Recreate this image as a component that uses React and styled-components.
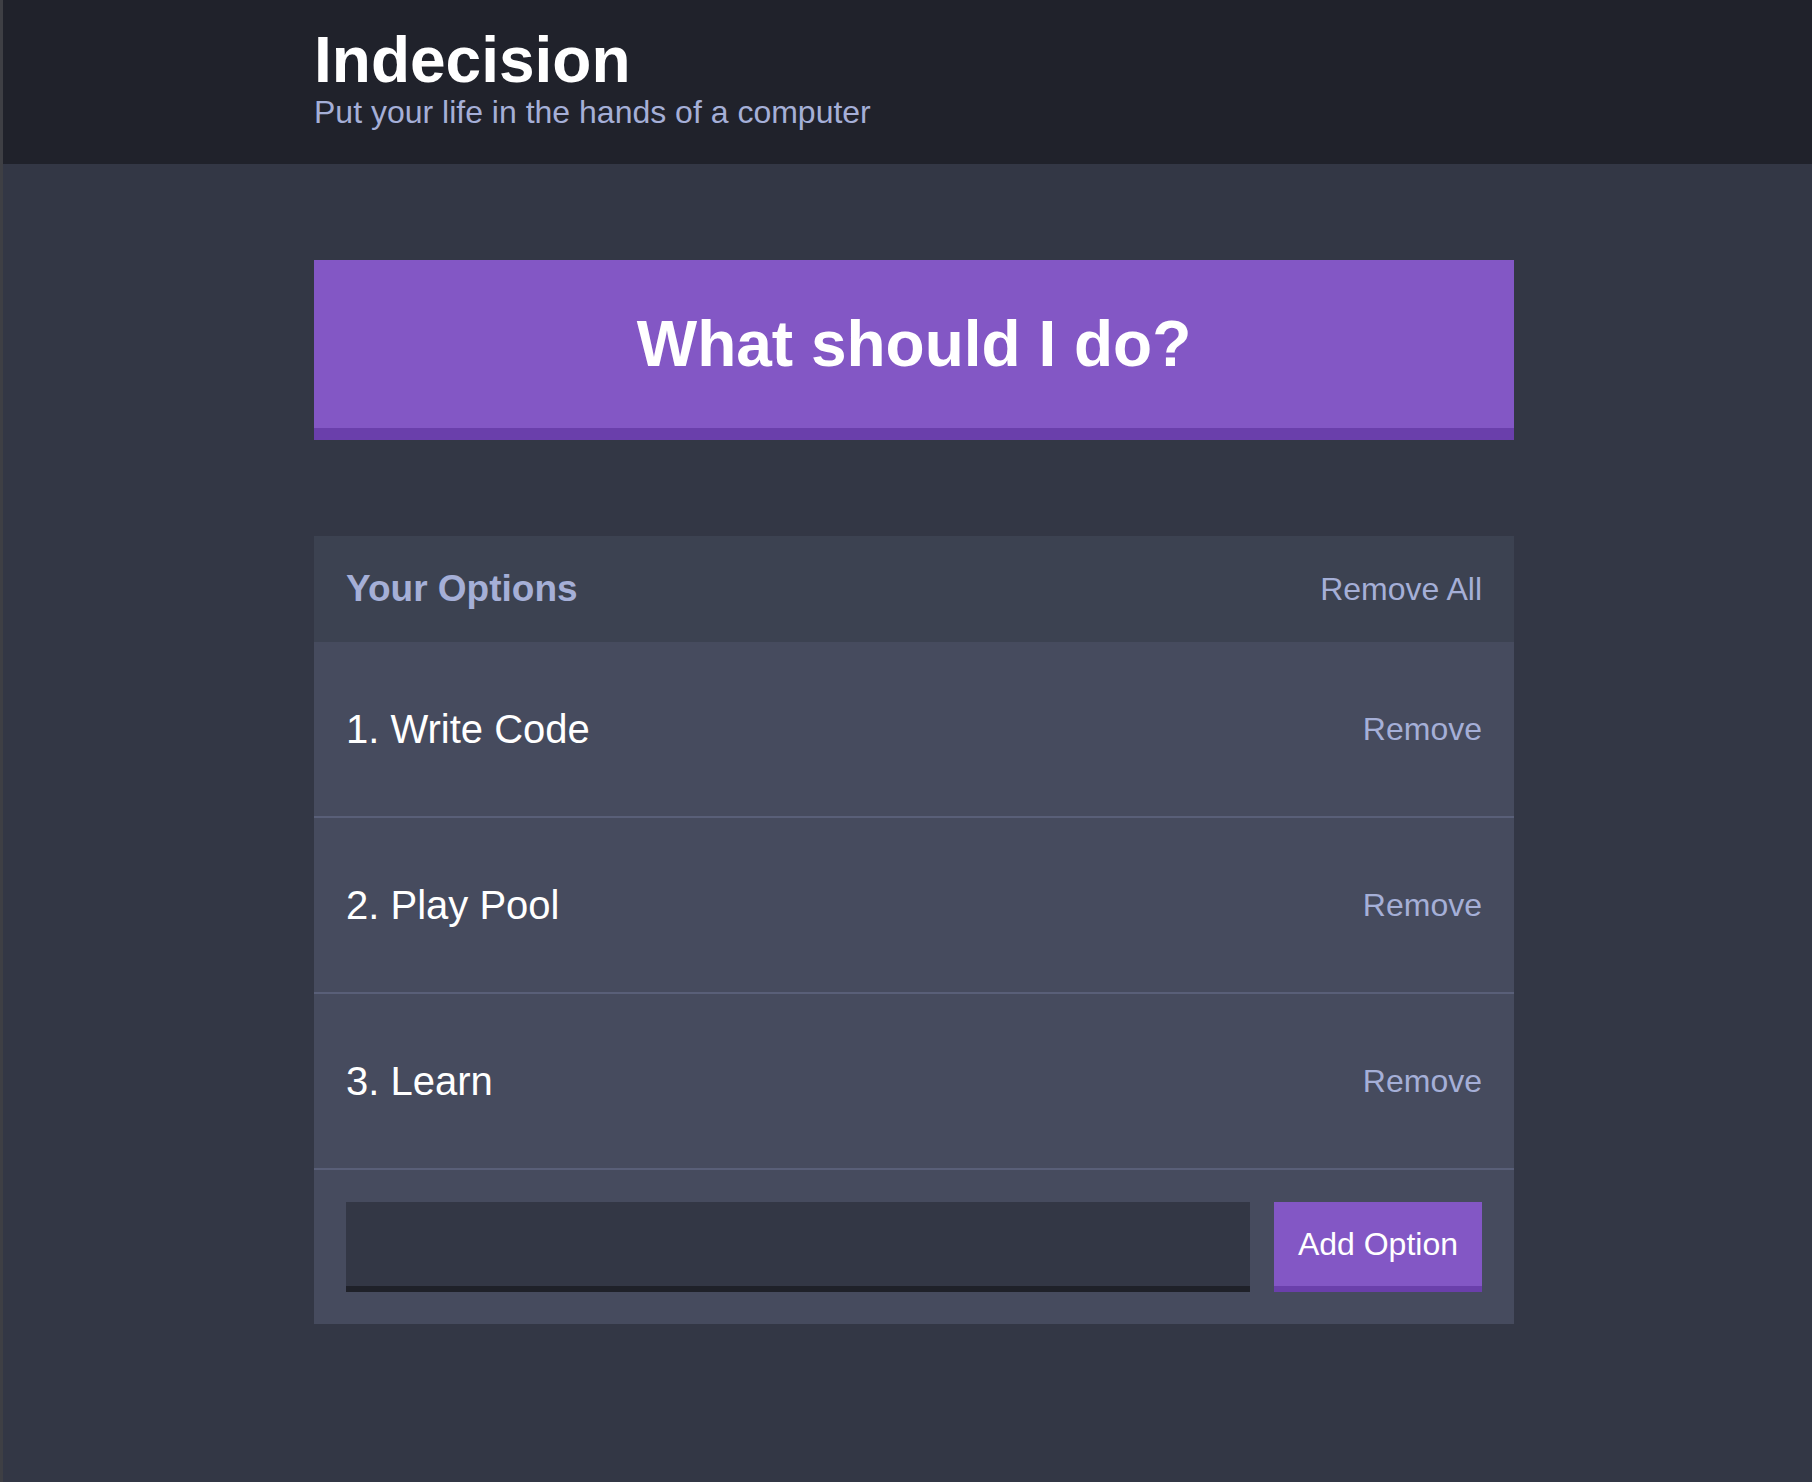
import React, { useState } from 'react';
import styled, { createGlobalStyle } from 'styled-components';

const GlobalStyle = createGlobalStyle`
    * { box-sizing: border-box; }
    html, body { margin: 0; padding: 0; }
    body {
        background: #333745;
        font-family: Helvetica, "Liberation Sans", Arial, sans-serif;
        color: #fff;
    }
`;

const Page = styled.div`
    min-height: 1482px;
    background: #333745;
    border-left: 3px solid #3e3f44;
    padding-left: 13px;
`;

const Header = styled.header`
    background: #20222b;
    margin: 0 0 96px -13px;
    padding: 28px 0 31px 13px;
`;

const Container = styled.div`
    max-width: 1200px;
    margin: 0 auto;
`;

const Title = styled.h1`
    margin: 0;
    font-size: 64px;
    line-height: 64px;
    font-weight: bold;
    color: #fff;
`;

const Subtitle = styled.h2`
    margin: 0;
    font-size: 32px;
    line-height: 41px;
    font-weight: 500;
    color: #a5afd7;
`;

const BigButton = styled.button`
    display: block;
    width: 100%;
    background: #8357c5;
    border: none;
    border-bottom: 12px solid #6a3fab;
    color: #fff;
    font-family: inherit;
    font-weight: bold;
    font-size: 64px;
    line-height: 72px;
    padding: 48px;
    margin: 0 0 96px;
    cursor: pointer;
`;

const Widget = styled.div`
    background: #464b5e;
    margin-bottom: 96px;
`;

const WidgetHeader = styled.div`
    display: flex;
    justify-content: space-between;
    align-items: center;
    background: #3c4251;
    padding: 32px;
`;

const WidgetTitle = styled.h3`
    margin: 0;
    color: #a5afd7;
    font-size: 37px;
    line-height: 42px;
    font-weight: bold;
`;

const LinkButton = styled.button`
    background: none;
    border: none;
    padding: 0;
    color: #a5afd7;
    font-family: inherit;
    font-size: 32px;
    line-height: 37px;
    cursor: pointer;
`;

const Option = styled.div`
    display: flex;
    justify-content: space-between;
    align-items: center;
    padding: 64px 32px;
    border-bottom: 2px solid #595f78;
`;

const OptionText = styled.p`
    margin: 0;
    color: #fff;
    font-size: 40px;
    line-height: 46px;
    font-weight: 500;
`;

const AddForm = styled.form`
    display: flex;
    padding: 32px;
`;

const Input = styled.input`
    flex-grow: 1;
    background: #333745;
    border: none;
    border-bottom: 6px solid #1f2129;
    color: #a5afd7;
    font-family: inherit;
    font-size: 32px;
    line-height: 36px;
    margin: 0 24px 0 0;
    padding: 24px;
    outline: none;
`;

const Button = styled.button`
    background: #8357c5;
    border: none;
    border-bottom: 6px solid #6a3fab;
    color: #fff;
    font-family: inherit;
    font-size: 32px;
    line-height: 36px;
    font-weight: 500;
    padding: 24px;
    cursor: pointer;
`;

const App = () => {
    const [options, setOptions] = useState(['Write Code', 'Play Pool', 'Learn']);
    const [text, setText] = useState('');

    const handleAdd = (e) => {
        e.preventDefault();
        if (text.trim()) {
            setOptions([...options, text.trim()]);
            setText('');
        }
    };

    return (
        <Page>
            <GlobalStyle />
            <Header>
                <Container>
                    <Title>Indecision</Title>
                    <Subtitle>Put your life in the hands of a computer</Subtitle>
                </Container>
            </Header>
            <Container>
                <BigButton>What should I do?</BigButton>
                <Widget>
                    <WidgetHeader>
                        <WidgetTitle>Your Options</WidgetTitle>
                        <LinkButton onClick={() => setOptions([])}>Remove All</LinkButton>
                    </WidgetHeader>
                    {options.map((o, k) =>
                        <Option key={o + k}>
                            <OptionText>{k + 1}. {o}</OptionText>
                            <LinkButton onClick={() => setOptions(options.filter((_, i) => i !== k))}>Remove</LinkButton>
                        </Option>
                    )}
                    <AddForm onSubmit={handleAdd}>
                        <Input value={text} onChange={(e) => setText(e.target.value)} />
                        <Button>Add Option</Button>
                    </AddForm>
                </Widget>
            </Container>
        </Page>
    );
};

export default App;
